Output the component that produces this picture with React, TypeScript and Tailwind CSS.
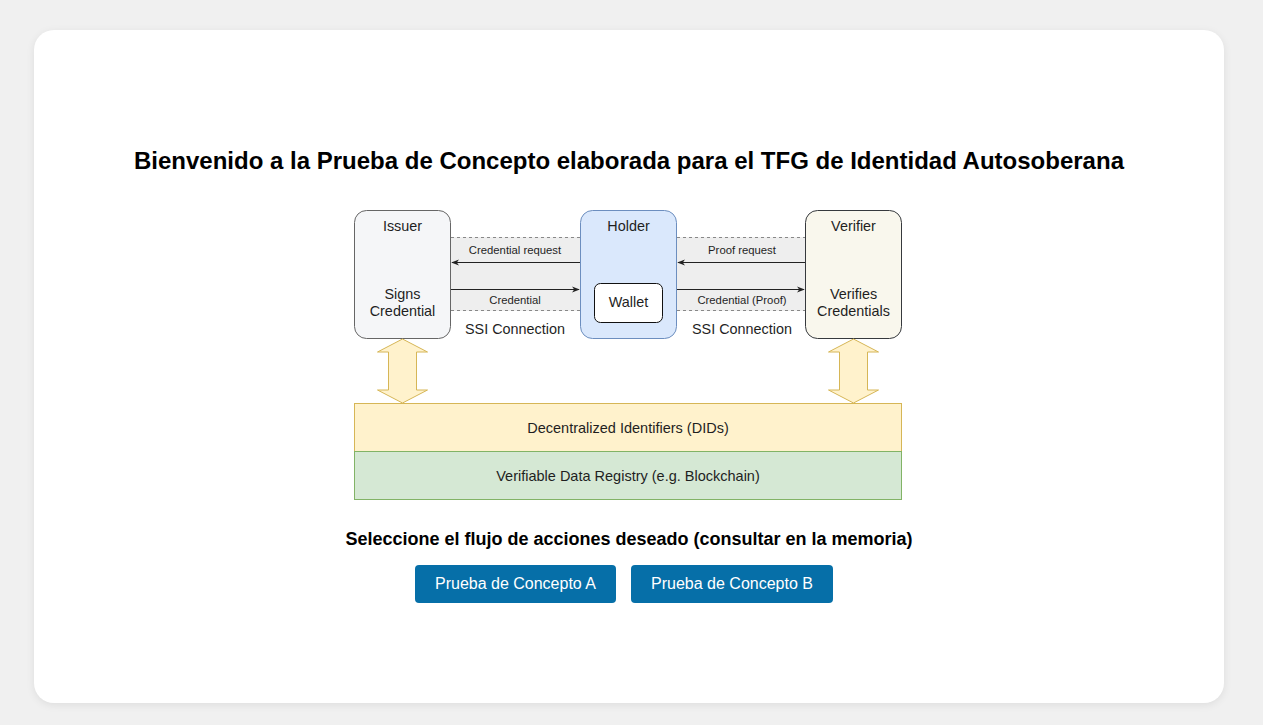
function DoubleArrow({ cx }: { cx: number }) {
  const top = 130
  const bot = 194
  const hb1 = 143
  const hb2 = 181
  const pts = [
    [cx, top],
    [cx + 25, hb1],
    [cx + 14, hb1],
    [cx + 14, hb2],
    [cx + 25, hb2],
    [cx, bot],
    [cx - 25, hb2],
    [cx - 14, hb2],
    [cx - 14, hb1],
    [cx - 25, hb1],
  ]
    .map((p) => p.join(','))
    .join(' ')
  return <polygon points={pts} fill="#fff2cc" stroke="#d6b656" strokeWidth="1" />
}

function Diagram() {
  const txt = { fontFamily: '"Liberation Sans", Arial, sans-serif', fill: '#1f1f1f' }
  return (
    <svg width="550" height="292" viewBox="0 0 550 292" style={txt}>
      <defs>
        <marker id="ah" viewBox="0 0 10 10" refX="9" refY="5" markerWidth="8" markerHeight="8" orient="auto-start-reverse">
          <path d="M0,1 L10,5 L0,9 L3,5 Z" fill="#222" />
        </marker>
      </defs>

      {/* connection bands */}
      <rect x="98" y="28" width="129" height="74" fill="#eeeeee" />
      <rect x="324" y="28" width="128" height="74" fill="#eeeeee" />
      <line x1="98" y1="28.5" x2="227" y2="28.5" stroke="#888" strokeDasharray="3 3" />
      <line x1="98" y1="101.5" x2="227" y2="101.5" stroke="#888" strokeDasharray="3 3" />
      <line x1="324" y1="28.5" x2="452" y2="28.5" stroke="#888" strokeDasharray="3 3" />
      <line x1="324" y1="101.5" x2="452" y2="101.5" stroke="#888" strokeDasharray="3 3" />

      <line x1="227" y1="53.5" x2="99" y2="53.5" stroke="#222" markerEnd="url(#ah)" />
      <line x1="98" y1="80.5" x2="226" y2="80.5" stroke="#222" markerEnd="url(#ah)" />
      <line x1="452" y1="53.5" x2="325" y2="53.5" stroke="#222" markerEnd="url(#ah)" />
      <line x1="324" y1="80.5" x2="451" y2="80.5" stroke="#222" markerEnd="url(#ah)" />

      <g fontSize="11.3" textAnchor="middle">
        <text x="162" y="45">Credential request</text>
        <text x="162" y="95">Credential</text>
        <text x="389" y="45">Proof request</text>
        <text x="389" y="95">Credential (Proof)</text>
      </g>

      {/* actors */}
      <rect x="1.5" y="1.5" width="96" height="128" rx="12" fill="#f5f6f8" stroke="#666" />
      <rect x="227.5" y="1.5" width="96" height="128" rx="12" fill="#dae8fc" stroke="#6c8ebf" />
      <rect x="452.5" y="1.5" width="96" height="128" rx="12" fill="#f9f7ed" stroke="#36393d" />
      <rect x="241.5" y="74.5" width="68" height="39" rx="6" fill="#fff" stroke="#111" />

      <g fontSize="14.4" textAnchor="middle">
        <text x="49.5" y="22">Issuer</text>
        <text x="49.5" y="90">Signs</text>
        <text x="49.5" y="107">Credential</text>
        <text x="275.5" y="22">Holder</text>
        <text x="275.5" y="98">Wallet</text>
        <text x="500.5" y="22">Verifier</text>
        <text x="500.5" y="90">Verifies</text>
        <text x="500.5" y="107">Credentials</text>
        <text x="162" y="125">SSI Connection</text>
        <text x="389" y="125">SSI Connection</text>
      </g>

      <DoubleArrow cx={49.5} />
      <DoubleArrow cx={500.5} />

      <rect x="1.5" y="194.5" width="547" height="48" fill="#fff2cc" stroke="#d6b656" />
      <rect x="1.5" y="242.5" width="547" height="48" fill="#d5e8d4" stroke="#82b366" />
      <g fontSize="14.5" textAnchor="middle">
        <text x="275" y="224">Decentralized Identifiers (DIDs)</text>
        <text x="275" y="272">Verifiable Data Registry (e.g. Blockchain)</text>
      </g>
    </svg>
  )
}

export default function App() {
  return (
    <div className="min-h-screen bg-[#f0f0f0] pl-[34px] pr-[39px] pt-[30px] pb-[22px] font-['Liberation_Sans',Arial,sans-serif]">
      <div className="h-[673px] rounded-[20px] bg-white shadow-[0_2px_8px_rgba(0,0,0,0.08)] flex flex-col items-center pt-[117px]">
        <h1 className="text-[24px] leading-[28px] font-bold text-black">
          Bienvenido a la Prueba de Concepto elaborada para el TFG de Identidad Autosoberana
        </h1>
        <div className="mt-[34px] mr-[3px]">
          <Diagram />
        </div>
        <h2 className="mt-[27px] text-[18px] leading-[22px] font-bold text-black">
          Seleccione el flujo de acciones deseado (consultar en la memoria)
        </h2>
        <div className="mt-[15px] mr-[10px] flex gap-[15px]">
          <button className="h-[38px] w-[201px] rounded-[4px] bg-[#066fa8] text-[16px] text-white">
            Prueba de Concepto A
          </button>
          <button className="h-[38px] w-[202px] rounded-[4px] bg-[#066fa8] text-[16px] text-white">
            Prueba de Concepto B
          </button>
        </div>
      </div>
    </div>
  )
}
